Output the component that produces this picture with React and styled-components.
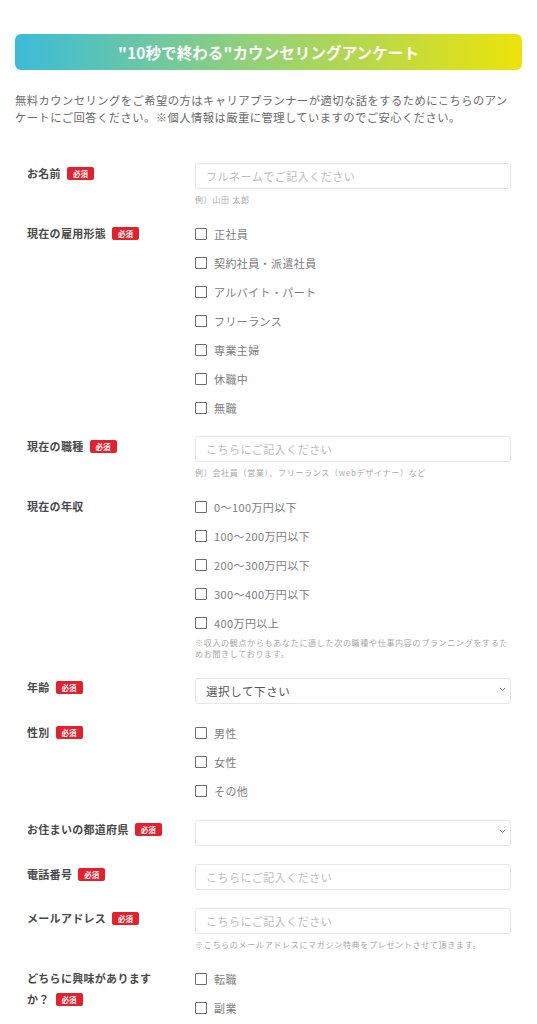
import React from "react";
import styled, { createGlobalStyle } from "styled-components";

const Global = createGlobalStyle`
  html, body { margin: 0; padding: 0; background: #fff; }
  body { font-family: "Noto Sans CJK JP", "Noto Sans", sans-serif; }
  * { box-sizing: border-box; }
`;

const Page = styled.div`
  padding: 34px 15px 40px;
`;

const Banner = styled.h1`
  margin: 0;
  height: 36px;
  border-radius: 6px;
  background: linear-gradient(90deg, #3bbbd9 0%, #8fd07c 45%, #ece30a 100%);
  color: #fff;
  font-size: 15.5px;
  font-weight: 700;
  display: flex;
  align-items: center;
  justify-content: center;
  letter-spacing: 0.1px;
`;

const Intro = styled.p`
  margin: 22px 0 0;
  padding-right: 8px;
  font-size: 11.3px;
  letter-spacing: 0.45px;
  line-height: 17px;
  color: #6a6a6a;
`;

const Form = styled.form`
  margin-top: 37px;
  padding: 0 11px 0 12px;
  display: flex;
  flex-direction: column;
  gap: 18px;
`;

const Row = styled.div`
  display: grid;
  grid-template-columns: 168px 1fr;
  align-items: start;
`;

const Label = styled.div`
  width: 140px;
  font-size: 11px;
  letter-spacing: 0.3px;
  line-height: 21px;
  font-weight: 700;
  color: #4a4a4a;
`;

const Badge = styled.span`
  display: inline-block;
  margin-left: 6px;
  width: 27px;
  height: 13px;
  line-height: 13px;
  border-radius: 2px;
  background: #e3202c;
  color: #fff;
  font-size: 7.5px;
  font-weight: 700;
  letter-spacing: 0;
  text-align: center;
  vertical-align: 1px;
`;

const Field = styled.div`
  display: flex;
  flex-direction: column;
  min-width: 0;
`;

const TextInput = styled.input`
  width: 100%;
  height: 26px;
  border: 1px solid #e6e6e6;
  border-radius: 3px;
  padding: 0 10px;
  font-family: inherit;
  font-size: 11px;
  letter-spacing: 0.5px;
  color: #555;
  outline: none;
  &::placeholder { color: #bdbdbd; }
`;

const SelectWrap = styled.div`
  position: relative;
  width: 100%;
`;

const Select = styled.select`
  width: 100%;
  height: 26px;
  appearance: none;
  -webkit-appearance: none;
  background: #fff;
  border: 1px solid #e6e6e6;
  border-radius: 3px;
  padding: 0 24px 0 10px;
  font-family: inherit;
  font-size: 11.5px;
  letter-spacing: 0.6px;
  color: #555;
  outline: none;
`;

const Chevron = styled.svg`
  position: absolute;
  right: 5px;
  top: 10px;
  width: 7px;
  height: 5px;
  pointer-events: none;
`;

const Hint = styled.div`
  margin-top: 5px;
  font-size: 8px;
  letter-spacing: 0.7px;
  line-height: ${(p) => (p.$tight ? "10.5px" : "11px")};
  color: #a8a8a8;
`;

const CheckList = styled.div`
  display: flex;
  flex-direction: column;
  gap: 8px;
`;

const CheckItem = styled.label`
  display: flex;
  align-items: center;
  height: 21px;
  font-size: 11px;
  letter-spacing: 0.4px;
  color: #7d7d7d;
`;

const Box = styled.input`
  appearance: none;
  -webkit-appearance: none;
  margin: 0 7px 0 0;
  width: 12px;
  height: 12px;
  border: 1.6px solid #6e6e6e;
  border-radius: 1px;
  background: #fff;
  flex: none;
`;

function Req() {
  return <Badge>必須</Badge>;
}

function Checks({ items }) {
  return (
    <CheckList>
      {items.map((t) => (
        <CheckItem key={t}>
          <Box type="checkbox" />
          {t}
        </CheckItem>
      ))}
    </CheckList>
  );
}

function Dropdown({ children }) {
  return (
    <SelectWrap>
      <Select defaultValue="">{children}</Select>
      <Chevron viewBox="0 0 7 5">
        <path d="M0.8 0.8 L3.5 3.6 L6.2 0.8" fill="none" stroke="#777" strokeWidth="1" />
      </Chevron>
    </SelectWrap>
  );
}

export default function App() {
  return (
    <Page>
      <Global />
      <Banner>"10秒で終わる"カウンセリングアンケート</Banner>
      <Intro>
        無料カウンセリングをご希望の方はキャリアプランナーが適切な話をするためにこちらのアンケートにご回答ください。※個人情報は厳重に管理していますのでご安心ください。
      </Intro>
      <Form>
        <Row>
          <Label>お名前<Req /></Label>
          <Field>
            <TextInput placeholder="フルネームでご記入ください" />
            <Hint>例）山田 太郎</Hint>
          </Field>
        </Row>
        <Row>
          <Label>現在の雇用形態<Req /></Label>
          <Checks items={["正社員", "契約社員・派遣社員", "アルバイト・パート", "フリーランス", "専業主婦", "休職中", "無職"]} />
        </Row>
        <Row>
          <Label>現在の職種<Req /></Label>
          <Field>
            <TextInput placeholder="こちらにご記入ください" />
            <Hint>例）会社員（営業）、フリーランス（webデザイナー）など</Hint>
          </Field>
        </Row>
        <Row>
          <Label>現在の年収</Label>
          <Field>
            <Checks items={["0〜100万円以下", "100〜200万円以下", "200〜300万円以下", "300〜400万円以下", "400万円以上"]} />
            <Hint $tight>※収入の観点からもあなたに適した次の職種や仕事内容のプランニングをするためお聞きしております。</Hint>
          </Field>
        </Row>
        <Row>
          <Label>年齢<Req /></Label>
          <Dropdown>
            <option value="">選択して下さい</option>
          </Dropdown>
        </Row>
        <Row>
          <Label>性別<Req /></Label>
          <Checks items={["男性", "女性", "その他"]} />
        </Row>
        <Row>
          <Label>お住まいの都道府県<Req /></Label>
          <Dropdown>
            <option value=""></option>
          </Dropdown>
        </Row>
        <Row>
          <Label>電話番号<Req /></Label>
          <TextInput placeholder="こちらにご記入ください" />
        </Row>
        <Row>
          <Label>メールアドレス<Req /></Label>
          <Field>
            <TextInput placeholder="こちらにご記入ください" />
            <Hint>※こちらのメールアドレスにマガジン特典をプレゼントさせて頂きます。</Hint>
          </Field>
        </Row>
        <Row>
          <Label>どちらに興味がありますか？<Req /></Label>
          <Checks items={["転職", "副業"]} />
        </Row>
      </Form>
    </Page>
  );
}
